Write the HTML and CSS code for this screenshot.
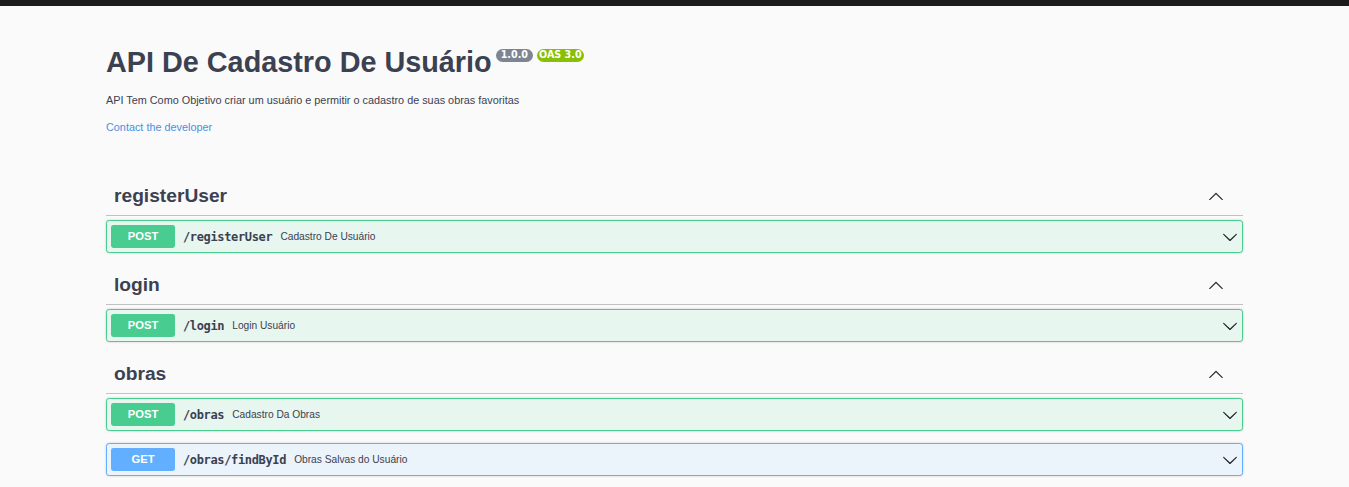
FILE: index.html
```html
<!DOCTYPE html>
<html lang="pt">
<head>
<meta charset="utf-8">
<title>API De Cadastro De Usuário</title>
<link rel="stylesheet" href="styles.css">
</head>
<body>
<div class="topbar"></div>
<div class="wrapper">
  <section class="info">
    <div class="title-row">
      <h2 class="title">API De Cadastro De Usuário</h2>
      <span class="badge version">1.0.0</span>
      <span class="badge oas">OAS 3.0</span>
    </div>
    <p class="desc">API Tem Como Objetivo criar um usuário e permitir o cadastro de suas obras favoritas</p>
    <a class="contact" href="#">Contact the developer</a>
  </section>

  <section class="tag-section">
    <div class="tag-header">
      <h3 class="tag-name">registerUser</h3>
      <svg class="arrow-up" viewBox="0 0 20 20" width="16" height="16"><path d="M17.418 14.908c.272.268.709.268.979 0s.27-.701 0-.969l-7.908-7.83c-.27-.268-.707-.268-.979 0l-7.908 7.83c-.27.268-.27.701 0 .969.271.268.709.268.979 0L10 7.767l7.418 7.141z"/></svg>
    </div>
    <div class="opblock post">
      <span class="method">POST</span>
      <span class="path">/registerUser</span>
      <span class="summary">Cadastro De Usuário</span>
      <svg class="arrow-down" viewBox="0 0 20 20" width="16" height="16"><path d="M17.418 6.109c.272-.268.709-.268.979 0s.271.701 0 .969l-7.908 7.83c-.27.268-.707.268-.979 0l-7.908-7.830c-.27-.268-.27-.701 0-.969.271-.268.709-.268.979 0L10 13.25l7.418-7.141z"/></svg>
    </div>
  </section>

  <section class="tag-section">
    <div class="tag-header">
      <h3 class="tag-name">login</h3>
      <svg class="arrow-up" viewBox="0 0 20 20" width="16" height="16"><path d="M17.418 14.908c.272.268.709.268.979 0s.27-.701 0-.969l-7.908-7.83c-.27-.268-.707-.268-.979 0l-7.908 7.83c-.27.268-.27.701 0 .969.271.268.709.268.979 0L10 7.767l7.418 7.141z"/></svg>
    </div>
    <div class="opblock post">
      <span class="method">POST</span>
      <span class="path">/login</span>
      <span class="summary">Login Usuário</span>
      <svg class="arrow-down" viewBox="0 0 20 20" width="16" height="16"><path d="M17.418 6.109c.272-.268.709-.268.979 0s.271.701 0 .969l-7.908 7.83c-.27.268-.707.268-.979 0l-7.908-7.830c-.27-.268-.27-.701 0-.969.271-.268.709-.268.979 0L10 13.25l7.418-7.141z"/></svg>
    </div>
  </section>

  <section class="tag-section">
    <div class="tag-header">
      <h3 class="tag-name">obras</h3>
      <svg class="arrow-up" viewBox="0 0 20 20" width="16" height="16"><path d="M17.418 14.908c.272.268.709.268.979 0s.27-.701 0-.969l-7.908-7.83c-.27-.268-.707-.268-.979 0l-7.908 7.83c-.27.268-.27.701 0 .969.271.268.709.268.979 0L10 7.767l7.418 7.141z"/></svg>
    </div>
    <div class="opblock post">
      <span class="method">POST</span>
      <span class="path">/obras</span>
      <span class="summary">Cadastro Da Obras</span>
      <svg class="arrow-down" viewBox="0 0 20 20" width="16" height="16"><path d="M17.418 6.109c.272-.268.709-.268.979 0s.271.701 0 .969l-7.908 7.83c-.27.268-.707.268-.979 0l-7.908-7.830c-.27-.268-.27-.701 0-.969.271-.268.709-.268.979 0L10 13.25l7.418-7.141z"/></svg>
    </div>
    <div class="opblock get">
      <span class="method">GET</span>
      <span class="path">/obras/findById</span>
      <span class="summary">Obras Salvas do Usuário</span>
      <svg class="arrow-down" viewBox="0 0 20 20" width="16" height="16"><path d="M17.418 6.109c.272-.268.709-.268.979 0s.271.701 0 .969l-7.908 7.83c-.27.268-.707.268-.979 0l-7.908-7.830c-.27-.268-.27-.701 0-.969.271-.268.709-.268.979 0L10 13.25l7.418-7.141z"/></svg>
    </div>
  </section>
</div>
</body>
</html>
```

FILE: styles.css
```css
html, body {
  margin: 0;
  padding: 0;
}

body {
  background: #fafafa;
  font-family: "Liberation Sans", Arial, sans-serif;
  color: #3b4151;
  overflow: hidden;
}

.topbar {
  height: 6px;
  background: #1b1b1b;
}

.wrapper {
  width: 1137px;
  margin: 0 auto;
}

.info {
  padding-top: 40px;
  margin-bottom: 42px;
}

.title-row {
  display: flex;
  align-items: flex-start;
  margin-bottom: 15px;
}

.title {
  margin: 0;
  font-size: 28.8px;
  line-height: 33px;
  font-weight: 700;
  color: #3b4151;
}

.badge {
  margin-top: 3px;
  margin-left: 4px;
  height: 12.5px;
  line-height: 12.5px;
  font-family: "DejaVu Sans", "Liberation Sans", sans-serif;
  font-size: 9.6px;
  font-weight: 700;
  color: #fff;
  border-radius: 46px;
}

.badge.version {
  background: #7d8492;
  padding: 0 5px;
}

.badge.oas {
  background: #89bf04;
  padding: 0 2px;
}

.desc {
  margin: 0 0 14px;
  font-size: 10.85px;
  line-height: 13px;
  color: #3b4151;
}

.contact {
  display: block;
  font-size: 10.85px;
  line-height: 13px;
  color: #4990e2;
  text-decoration: none;
}

.tag-header {
  display: flex;
  align-items: center;
  justify-content: space-between;
  height: 23px;
  padding: 8px 19px 8px 8px;
  border-bottom: 1px solid rgba(59, 65, 81, 0.3);
  margin-bottom: 4px;
}

.tag-name {
  margin: 0;
  font-size: 19.2px;
  font-weight: 700;
  color: #3b4151;
}

.arrow-up,
.arrow-down {
  display: block;
  fill: #222;
  flex: none;
}

.opblock {
  display: flex;
  align-items: center;
  padding: 4px;
  margin-bottom: 12px;
  border-radius: 3.2px;
  box-shadow: 0 0 2.4px rgba(0, 0, 0, 0.19);
}

.opblock.post {
  background: #e8f6f0;
  border: 1px solid #49cc90;
}

.opblock.get {
  background: #ebf3fb;
  border: 1px solid #61affe;
}

.method {
  min-width: 64px;
  padding: 5px 0;
  font-size: 11.2px;
  line-height: 13px;
  font-weight: 700;
  text-align: center;
  color: #fff;
  border-radius: 2.4px;
}

.post .method {
  background: #49cc90;
}

.get .method {
  background: #61affe;
}

.path {
  padding: 0 8px;
  font-family: "DejaVu Sans Mono", "Liberation Mono", monospace;
  font-size: 12px;
  letter-spacing: -0.35px;
  font-weight: 700;
  color: #3b4151;
}

.summary {
  flex: 1;
  font-size: 10.2px;
  color: #3b4151;
}
```
